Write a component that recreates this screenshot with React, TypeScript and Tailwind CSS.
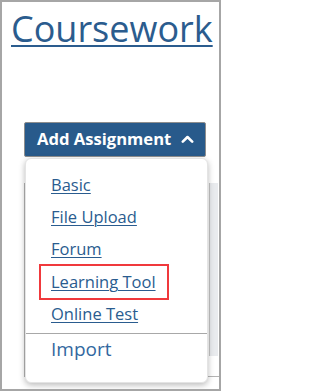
const items = ["Basic", "File Upload", "Forum", "Learning Tool", "Online Test"];

function ChevronUp() {
  return (
    <svg width="13" height="8" viewBox="0 0 13 8" fill="none" aria-hidden>
      <polyline
        points="1.8,6.6 6.5,2 11.2,6.6"
        stroke="white"
        strokeWidth="2.6"
        strokeLinecap="round"
        strokeLinejoin="round"
      />
    </svg>
  );
}

function AssignmentMenu() {
  return (
    <div className="absolute left-[23px] top-[156px] h-[225px] w-[183px] rounded-[6px] border border-[#e4e4e4] bg-white pt-[10px] shadow-[0_2px_6px_rgba(0,0,0,0.28)]">
      <ul>
        {items.map((item) => (
          <li className="relative h-[32.2px] pl-[25px] leading-[32.2px]" key={item}>
            <a
              className="text-[16.5px] text-[#2a5c8f] underline decoration-1 underline-offset-[2px]"
              href="#"
            >
              {item}
            </a>
            {item === "Learning Tool" ? (
              <span className="pointer-events-none absolute left-[13px] top-[-2px] h-[36px] w-[130px] border-2 border-[#f0393c]" />
            ) : null}
          </li>
        ))}
      </ul>
      <div className="mt-[3px] h-px bg-[#a8a8a8]" />
      <div className="pl-[25px] text-[19px] leading-[30px] text-[#3368a0]">Import</div>
    </div>
  );
}

export default function App() {
  return (
    <div
      className="relative h-[391px] w-[221px] overflow-hidden border-2 border-[#a6a6a6] bg-white"
      style={{ fontFamily: '"Open Sans", "Liberation Sans", sans-serif' }}
    >
      <h1 className="mt-[7px] pl-[9px] text-[36px] font-normal leading-[40px] text-[#2b5c8e]">
        <a className="underline decoration-2 underline-offset-[3px]" href="#">
          Coursework
        </a>
      </h1>

      <button
        className="ml-[22px] mt-[73px] flex h-[35px] w-[182px] items-center rounded-[2px] border border-[#8e8e8e] bg-[#285a8b] pl-[12px] text-[16.6px] font-bold text-white"
        type="button"
      >
        <span>Add Assignment</span>
        <span className="ml-[10px] mt-[-2px] flex">
          <ChevronUp />
        </span>
      </button>

      <div className="ml-[22px] mt-[26px] flex h-[194px] border-b border-l border-[#b4b4b4]">
        <div className="flex-1" />
        <div className="mr-[1px] h-[173px] w-[9px] border-l border-[#c4c4c4] bg-[#e9ebee]" />
      </div>

      <AssignmentMenu />
    </div>
  );
}
